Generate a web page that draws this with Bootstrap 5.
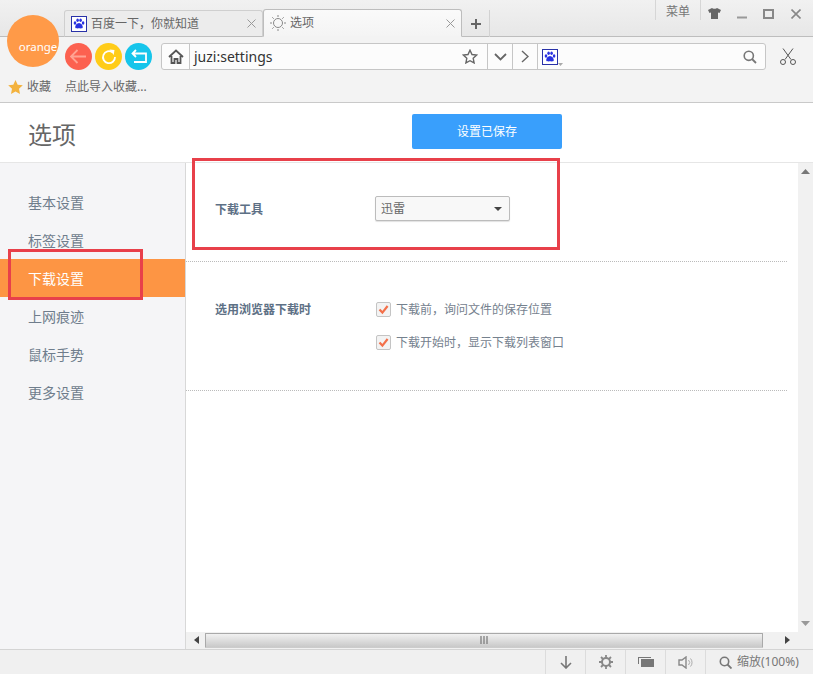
<!DOCTYPE html>
<html lang="zh-CN">
<head>
  <meta charset="UTF-8">
  <meta name="viewport" content="width=device-width, initial-scale=1">
  <title>选项</title>
  <link href="https://cdn.jsdelivr.net/npm/bootstrap@5.3.2/dist/css/bootstrap.min.css" rel="stylesheet">
  <style>
    html, body { height: 100%; overflow: hidden; }
    body {
      font-family: "Noto Sans", "Noto Sans CJK SC", sans-serif;
      font-size: 12px;
      color: #666;
      background: #fff;
    }
    .app-shell { height: 674px; width: 813px; position: relative; }

    /* browser chrome */
    .tab-strip { height: 37px; padding-left: 64px; background: linear-gradient(#f1f1f1, #e7e7e7); border-bottom: 1px solid #bdbdbd; position: relative; }
    .tab-item { width: 199px; height: 27px; margin-bottom: -1px; padding: 0 6px 0 6px; font-size: 12px; color: #666; border: 1px solid #cfcfcf; border-bottom-color: #bdbdbd; border-radius: 3px 3px 0 0; background: #ececec; }
    .tab-item.is-active { height: 28px; background: linear-gradient(#fafafa, #f4f4f4); border-color: #bdbdbd; border-bottom-color: #f3f3f3; }
    .tab-new { width: 28px; height: 27px; margin-bottom: -1px; font-size: 20px; line-height: 1; color: #666; border-right: 1px solid #d2d2d2; }
    .win-ctl { position: absolute; top: 0; right: 4px; height: 20px; }
    .win-menu { width: 46px; height: 20px; padding-top: 3px; border-left: 1px solid #d6d6d6; border-right: 1px solid #d6d6d6; color: #777; }
    .win-btn { width: 27px; height: 27px; }
    .tool-row { height: 36px; padding: 6px 0 0 65px; background: #f3f3f3; }
    .round-btn { width: 27px; height: 27px; border-radius: 50%; margin-right: 3px; }
    .round-red { background: #fc6150; }
    .round-yellow { background: #ffcc19; }
    .round-blue { background: #16c5eb; }
    .addr-bar { width: 605px; height: 27px; margin-left: 6px; background: #fcfcfc; border: 1px solid #c6c6c6; border-radius: 3px; }
    .addr-cell { width: 25px; height: 100%; border-left: 1px solid #c6c6c6; }
    .addr-home { width: 28px; height: 100%; border-right: 1px solid #c6c6c6; }
    .addr-text { font-size: 14px; color: #333; padding-left: 4px; }
    .addr-star { margin-right: 9px; }
    .addr-search { width: 228px; height: 100%; border-left: 1px solid #c6c6c6; padding: 0 8px 0 4px; }
    .cut-icon { margin: 5px 0 0 14px; }
    .fav-row { height: 30px; padding: 0 0 1px 8px; background: #f3f3f3; border-bottom: 1px solid #c9c9c9; }
    .fav-gap { margin-left: 14px; }
    .app-logo { position: absolute; left: 7px; top: 15px; width: 52px; height: 52px; padding: 22px 0 0 10px; border-radius: 50%; background: #ff9a48; color: #fff; font-size: 11.5px; text-align: center; line-height: 20px; }

    /* page */
    .page-head { height: 60px; padding-top: 6px; border-bottom: 1px solid #e6e6e6; position: relative; }
    .page-title { margin: 0 0 0 28px; font-size: 24px; font-weight: 400; color: #666; }
    .saved-btn { position: absolute; left: 412px; top: 11px; width: 150px; height: 35px; font-size: 12px; color: #fff; background: #399ffc; border: 0; border-radius: 2px; padding: 0; }
    .side-nav { width: 186px; padding-top: 20px; background: #f5f5f7; border-right: 1px solid #d8d8d8; }
    .side-link { height: 38px; padding-left: 28px; font-size: 14px; color: #6f7d8c; text-decoration: none; }
    .side-link.is-active { color: #fff; background: #fd9544; }
    .pane-body { width: 612px; }
    .pane-wrap { min-width: 0; }
    .set-row { margin-right: 11px; padding-left: 29px; border-bottom: 1px dotted #bbb; }
    .set-tool { height: 99px; padding-bottom: 7px; }
    .set-tool .set-label { padding-top: 2px; }
    .set-browser { height: 129px; padding-top: 39px; }
    .set-label { width: 160px; font-weight: 700; color: #5d7085; }
    .set-select { width: 135px; height: 25px; padding: 0 5px; font-size: 12px; line-height: 23px; color: #666; border: 1px solid #bcbcbc; border-radius: 2px; box-shadow: 0 1px 1px rgba(0,0,0,.12); background-color: #f8f8f8; background-image: url("data:image/svg+xml,%3Csvg xmlns='http://www.w3.org/2000/svg' width='8' height='4'%3E%3Cpath fill='%23444' d='M0 0h8L4 4z'/%3E%3C/svg%3E"); background-size: 8px 4px; background-position: right 7px center; }
    .set-checks { gap: 15px; margin-top: 0; }
    .set-check { min-height: 0; margin: 0; padding: 0 0 0 1px; color: #75818e; line-height: 18px; }
    .set-check .form-check-input { float: none; width: 15px; height: 15px; margin: 0 5px 0 0; vertical-align: -3px; border: 1px solid #c4c4c4; border-radius: 2px; background-color: #f3f3f3; background-size: 11px 11px; background-image: url("data:image/svg+xml,%3Csvg xmlns='http://www.w3.org/2000/svg' viewBox='0 0 11 11'%3E%3Cpath fill='none' stroke='%23f3704a' stroke-width='2.2' d='M1.5 5.5 4.4 8.6 9.6 2'/%3E%3C/svg%3E"); box-shadow: none; }
    .scroll-y { width: 15px; background: #f1f1f1; padding: 6px 0; }
    .scroll-x { height: 17px; background: #f1f1f1; padding: 0 13px 1px 1px; }
    .scroll-thumb { width: 558px; height: 15px; background: linear-gradient(#f1f1f1, #c9c9c9); border: 1px solid #a9a9a9; border-bottom-color: #ccc; border-radius: 1px; }
    .scroll-arrow { width: 18px; }
    .scroll-pad { width: 25px; }
    .status-bar { height: 25px; background: #f0f0f0; border-top: 1px solid #d4d4d4; color: #777; }
    .status-cell { width: 40px; height: 100%; border-left: 1px solid #dcdcdc; }
    .status-zoom { width: 108px; height: 100%; padding-left: 13px; gap: 5px; border-left: 1px solid #dcdcdc; }

    /* annotation boxes drawn over the shot */
    .note-box { position: absolute; border: 3px solid #e8404a; pointer-events: none; }
    .note-tool { left: 192px; top: 158px; width: 368px; height: 92px; }
    .note-nav { left: 8px; top: 249px; width: 135px; height: 51px; }
  </style>
</head>
<body>
  <div class="app-shell d-flex flex-column">

    <div class="tab-strip d-flex align-items-end flex-shrink-0">
      <div class="tab-item d-flex align-items-center gap-1">
        <svg width="16" height="16" viewBox="0 0 16 16"><rect x=".5" y=".5" width="15" height="15" fill="#fff" stroke="#2932a8"/><g fill="#2932e1"><ellipse cx="4" cy="7" rx="1.3" ry="1.7"/><ellipse cx="6.6" cy="4.3" rx="1.3" ry="1.7"/><ellipse cx="9.6" cy="4.3" rx="1.3" ry="1.7"/><ellipse cx="12.1" cy="7" rx="1.3" ry="1.7"/><path d="M8 7c-2 0-3.800 2.300-3.800 4 0 1.600 1.800 1.500 3.800 1.300 2 .2 3.800.3 3.800-1.300C11.800 9.300 10 7 8 7z"/></g></svg>
        <span class="flex-grow-1">百度一下，你就知道</span>
        <svg width="9" height="9" viewBox="0 0 9 9"><path d="M.5.5l8 8m0-8l-8 8" stroke="#999" fill="none"/></svg>
      </div>
      <div class="tab-item is-active d-flex align-items-center gap-1">
        <svg width="16" height="16" viewBox="0 0 16 16" fill="none" stroke="#888"><circle cx="8" cy="8" r="4.500"/><path d="M8 0v2M8 14v2M0 8h2M14 8h2M2.300 2.300l1.400 1.400M12.300 12.300l1.400 1.400M13.700 2.300l-1.400 1.400M3.700 12.300l-1.400 1.400"/></svg>
        <span class="flex-grow-1">选项</span>
        <svg width="9" height="9" viewBox="0 0 9 9"><path d="M.5.5l8 8m0-8l-8 8" stroke="#999" fill="none"/></svg>
      </div>
      <div class="tab-new d-flex align-items-center justify-content-center">
        <svg width="12" height="12" viewBox="0 0 12 12"><path d="M6 1v10M1 6h10" stroke="#666" stroke-width="2" fill="none"/></svg>
      </div>
      <div class="win-ctl d-flex align-items-start">
        <div class="win-menu d-flex align-items-center justify-content-center">菜单</div>
        <div class="win-btn d-flex align-items-center justify-content-center">
          <svg width="13" height="11" viewBox="0 0 13 11"><path fill="#666" d="M4 0 0 2l1.500 3L3 4.500V11h7V4.500L11.500 5 13 2 9 0C8.500 1 4.500 1 4 0z"/></svg>
        </div>
        <div class="win-btn d-flex align-items-center justify-content-center">
          <svg width="10" height="10" viewBox="0 0 10 10"><path d="M0 8.500h10" stroke="#999" stroke-width="2"/></svg>
        </div>
        <div class="win-btn d-flex align-items-center justify-content-center">
          <svg width="11" height="10" viewBox="0 0 11 10"><rect x="1" y="1" width="9" height="8" fill="none" stroke="#888" stroke-width="2"/></svg>
        </div>
        <div class="win-btn d-flex align-items-center justify-content-center">
          <svg width="10" height="10" viewBox="0 0 10 10"><path d="M.5.5l9 9m0-9l-9 9" stroke="#888" stroke-width="1.600" fill="none"/></svg>
        </div>
      </div>
    </div>

    <div class="tool-row d-flex align-items-start flex-shrink-0">
      <div class="round-btn round-red d-flex align-items-center justify-content-center">
        <svg width="17" height="15" viewBox="0 0 17 15"><path d="M7.500 1 1 7.500 7.500 14M1 7.500h15" fill="none" stroke="#ffa393" stroke-width="1.800"/></svg>
      </div>
      <div class="round-btn round-yellow d-flex align-items-center justify-content-center">
        <svg width="16" height="16" viewBox="0 0 16 16"><path d="M11.500 3.300A6 6 0 1 0 14 8" fill="none" stroke="#fff" stroke-width="1.800"/><path d="M8.500 .5l5 .5-.8 5z" fill="#fff"/></svg>
      </div>
      <div class="round-btn round-blue d-flex align-items-center justify-content-center">
        <svg width="16" height="15" viewBox="0 0 16 15"><path d="M5 1 1.500 4.500 5 8M1.500 4.500H15V13H3" fill="none" stroke="#fff" stroke-width="1.800"/></svg>
      </div>
      <div class="addr-bar d-flex align-items-center">
        <div class="addr-home d-flex align-items-center justify-content-center">
          <svg width="16" height="15" viewBox="0 0 16 15"><path d="M1 8 8 1.500 15 8M3.500 7v7h3v-4h3v4h3V7" fill="none" stroke="#555" stroke-width="1.800"/></svg>
        </div>
        <div class="addr-text flex-grow-1">juzi:settings</div>
        <svg class="addr-star" width="16" height="15" viewBox="0 0 16 15"><path d="M8 1.200l2 4.300 4.700.6-3.500 3.200.9 4.600L8 11.700l-4.100 2.200.9-4.600L1.300 6.100 6 5.500z" fill="none" stroke="#666" stroke-width="1.400"/></svg>
        <div class="addr-cell d-flex align-items-center justify-content-center">
          <svg width="13" height="8" viewBox="0 0 13 8"><path d="M1 1l5.500 5.500L12 1" fill="none" stroke="#666" stroke-width="1.800"/></svg>
        </div>
        <div class="addr-cell d-flex align-items-center justify-content-center">
          <svg width="8" height="13" viewBox="0 0 8 13"><path d="M1 1l6 5.500L1 12" fill="none" stroke="#666" stroke-width="1.400"/></svg>
        </div>
        <div class="addr-search d-flex align-items-center">
          <svg width="16" height="16" viewBox="0 0 16 16"><rect x=".5" y=".5" width="15" height="15" fill="#fff" stroke="#2932a8"/><g fill="#2932e1"><ellipse cx="4" cy="7" rx="1.300" ry="1.700"/><ellipse cx="6.600" cy="4.300" rx="1.300" ry="1.700"/><ellipse cx="9.600" cy="4.300" rx="1.300" ry="1.700"/><ellipse cx="12.100" cy="7" rx="1.300" ry="1.700"/><path d="M8 7c-2 0-3.800 2.300-3.800 4 0 1.600 1.800 1.500 3.800 1.300 2 .2 3.800.3 3.800-1.300C11.800 9.300 10 7 8 7z"/></g></svg>
          <svg class="mt-3 flex-grow-0" width="5" height="3" viewBox="0 0 5 3"><path d="M0 0h5L2.500 3z" fill="#aaa"/></svg>
          <svg class="ms-auto" width="14" height="14" viewBox="0 0 14 14"><circle cx="5.800" cy="5.800" r="4.600" fill="none" stroke="#777" stroke-width="1.600"/><path d="M9 9l4 4" stroke="#777" stroke-width="1.800"/></svg>
        </div>
      </div>
      <svg class="cut-icon" width="16" height="17" viewBox="0 0 16 17"><path d="M3 .5 11 11.500M13 .5 5 11.500" fill="none" stroke="#555"/><circle cx="3" cy="14" r="2.500" fill="none" stroke="#555"/><circle cx="13" cy="14" r="2.500" fill="none" stroke="#555"/></svg>
    </div>

    <div class="fav-row d-flex align-items-center flex-shrink-0">
      <svg width="15" height="14" viewBox="0 0 15 14"><path fill="#f3b23d" d="M7.500 0l2.200 4.700 5.100.6-3.800 3.500 1 5.100-4.500-2.500L3 13.900l1-5.100L.2 5.300l5.100-.6z"/></svg>
      <span class="ms-1">收藏</span>
      <span class="fav-gap">点此导入收藏...</span>
    </div>

    <div class="page-head d-flex align-items-center flex-shrink-0">
      <h1 class="page-title">选项</h1>
      <button type="button" class="saved-btn">设置已保存</button>
    </div>

    <div class="d-flex flex-grow-1" style="min-height:0">
      <nav class="side-nav d-flex flex-column flex-shrink-0">
        <a href="#" class="side-link d-flex align-items-center">基本设置</a>
        <a href="#" class="side-link d-flex align-items-center">标签设置</a>
        <a href="#" class="side-link is-active d-flex align-items-center">下载设置</a>
        <a href="#" class="side-link d-flex align-items-center">上网痕迹</a>
        <a href="#" class="side-link d-flex align-items-center">鼠标手势</a>
        <a href="#" class="side-link d-flex align-items-center">更多设置</a>
      </nav>

      <div class="pane-wrap d-flex flex-column flex-grow-1">
        <div class="d-flex flex-grow-1" style="min-height:0">
          <div class="pane-body flex-grow-1">
            <div class="set-row set-tool d-flex align-items-center">
              <div class="set-label">下载工具</div>
              <select class="form-select set-select"><option>迅雷</option></select>
            </div>
            <div class="set-row set-browser d-flex align-items-start">
              <div class="set-label">选用浏览器下载时</div>
              <div class="set-checks d-flex flex-column">
                <label class="set-check form-check"><input class="form-check-input" type="checkbox" checked>下载前，询问文件的保存位置</label>
                <label class="set-check form-check"><input class="form-check-input" type="checkbox" checked>下载开始时，显示下载列表窗口</label>
              </div>
            </div>
          </div>
          <div class="scroll-y d-flex flex-column justify-content-between align-items-center flex-shrink-0">
            <svg width="9" height="5" viewBox="0 0 9 5"><path d="M4.500 0 9 5H0z" fill="#777"/></svg>
            <svg width="9" height="5" viewBox="0 0 9 5"><path d="M4.500 5 9 0H0z" fill="#999"/></svg>
          </div>
        </div>
        <div class="scroll-x d-flex align-items-center flex-shrink-0">
          <div class="scroll-arrow d-flex justify-content-center">
            <svg width="5" height="8" viewBox="0 0 5 8"><path d="M0 4l5-4v8z" fill="#444"/></svg>
          </div>
          <div class="scroll-thumb d-flex align-items-center justify-content-center">
            <svg width="8" height="8" viewBox="0 0 8 8"><path d="M1 0v8M4 0v8M7 0v8" stroke="#777" stroke-width="1.200"/></svg>
          </div>
          <div class="flex-grow-1"></div>
          <div class="scroll-pad d-flex justify-content-center">
            <svg width="5" height="8" viewBox="0 0 5 8"><path d="M5 4 0 0v8z" fill="#444"/></svg>
          </div>
        </div>
      </div>
    </div>

    <div class="status-bar d-flex justify-content-end align-items-center flex-shrink-0">
      <div class="status-cell d-flex align-items-center justify-content-center">
        <svg width="12" height="13" viewBox="0 0 12 13"><path d="M6 0v12M1 7l5 5 5-5" fill="none" stroke="#777" stroke-width="1.600"/></svg>
      </div>
      <div class="status-cell d-flex align-items-center justify-content-center">
        <svg width="14" height="14" viewBox="0 0 14 14"><circle cx="7" cy="7" r="4" fill="none" stroke="#888" stroke-width="2"/><path d="M7 0v3M7 11v3M0 7h3M11 7h3M2 2l2 2M10 10l2 2M12 2l-2 2M4 10l-2 2" stroke="#888" stroke-width="1.800"/></svg>
      </div>
      <div class="status-cell d-flex align-items-center justify-content-center">
        <svg width="16" height="12" viewBox="0 0 16 12"><path fill="#777" d="M0 1h13v1H1v6H0zM3 3h13v8H3z"/></svg>
      </div>
      <div class="status-cell d-flex align-items-center justify-content-center">
        <svg width="15" height="13" viewBox="0 0 15 13"><path d="M1 4h3l4-3v11L4 9H1z" fill="none" stroke="#888" stroke-width="1.400"/><path d="M10.500 4a3.500 3.500 0 0 1 0 5M12.500 2.500a6 6 0 0 1 0 8" fill="none" stroke="#aaa"/></svg>
      </div>
      <div class="status-zoom d-flex align-items-center">
        <svg width="13" height="13" viewBox="0 0 13 13"><circle cx="5.500" cy="5.500" r="4.200" fill="none" stroke="#777" stroke-width="1.600"/><path d="M8.500 8.500l4 4" stroke="#777" stroke-width="1.800"/></svg>
        <span>缩放(100%)</span>
      </div>
    </div>

    <div class="app-logo">orange</div>
    <div class="note-box note-tool"></div>
    <div class="note-box note-nav"></div>
  </div>
  <script src="https://cdn.jsdelivr.net/npm/bootstrap@5.3.2/dist/js/bootstrap.bundle.min.js"></script>
</body>
</html>
